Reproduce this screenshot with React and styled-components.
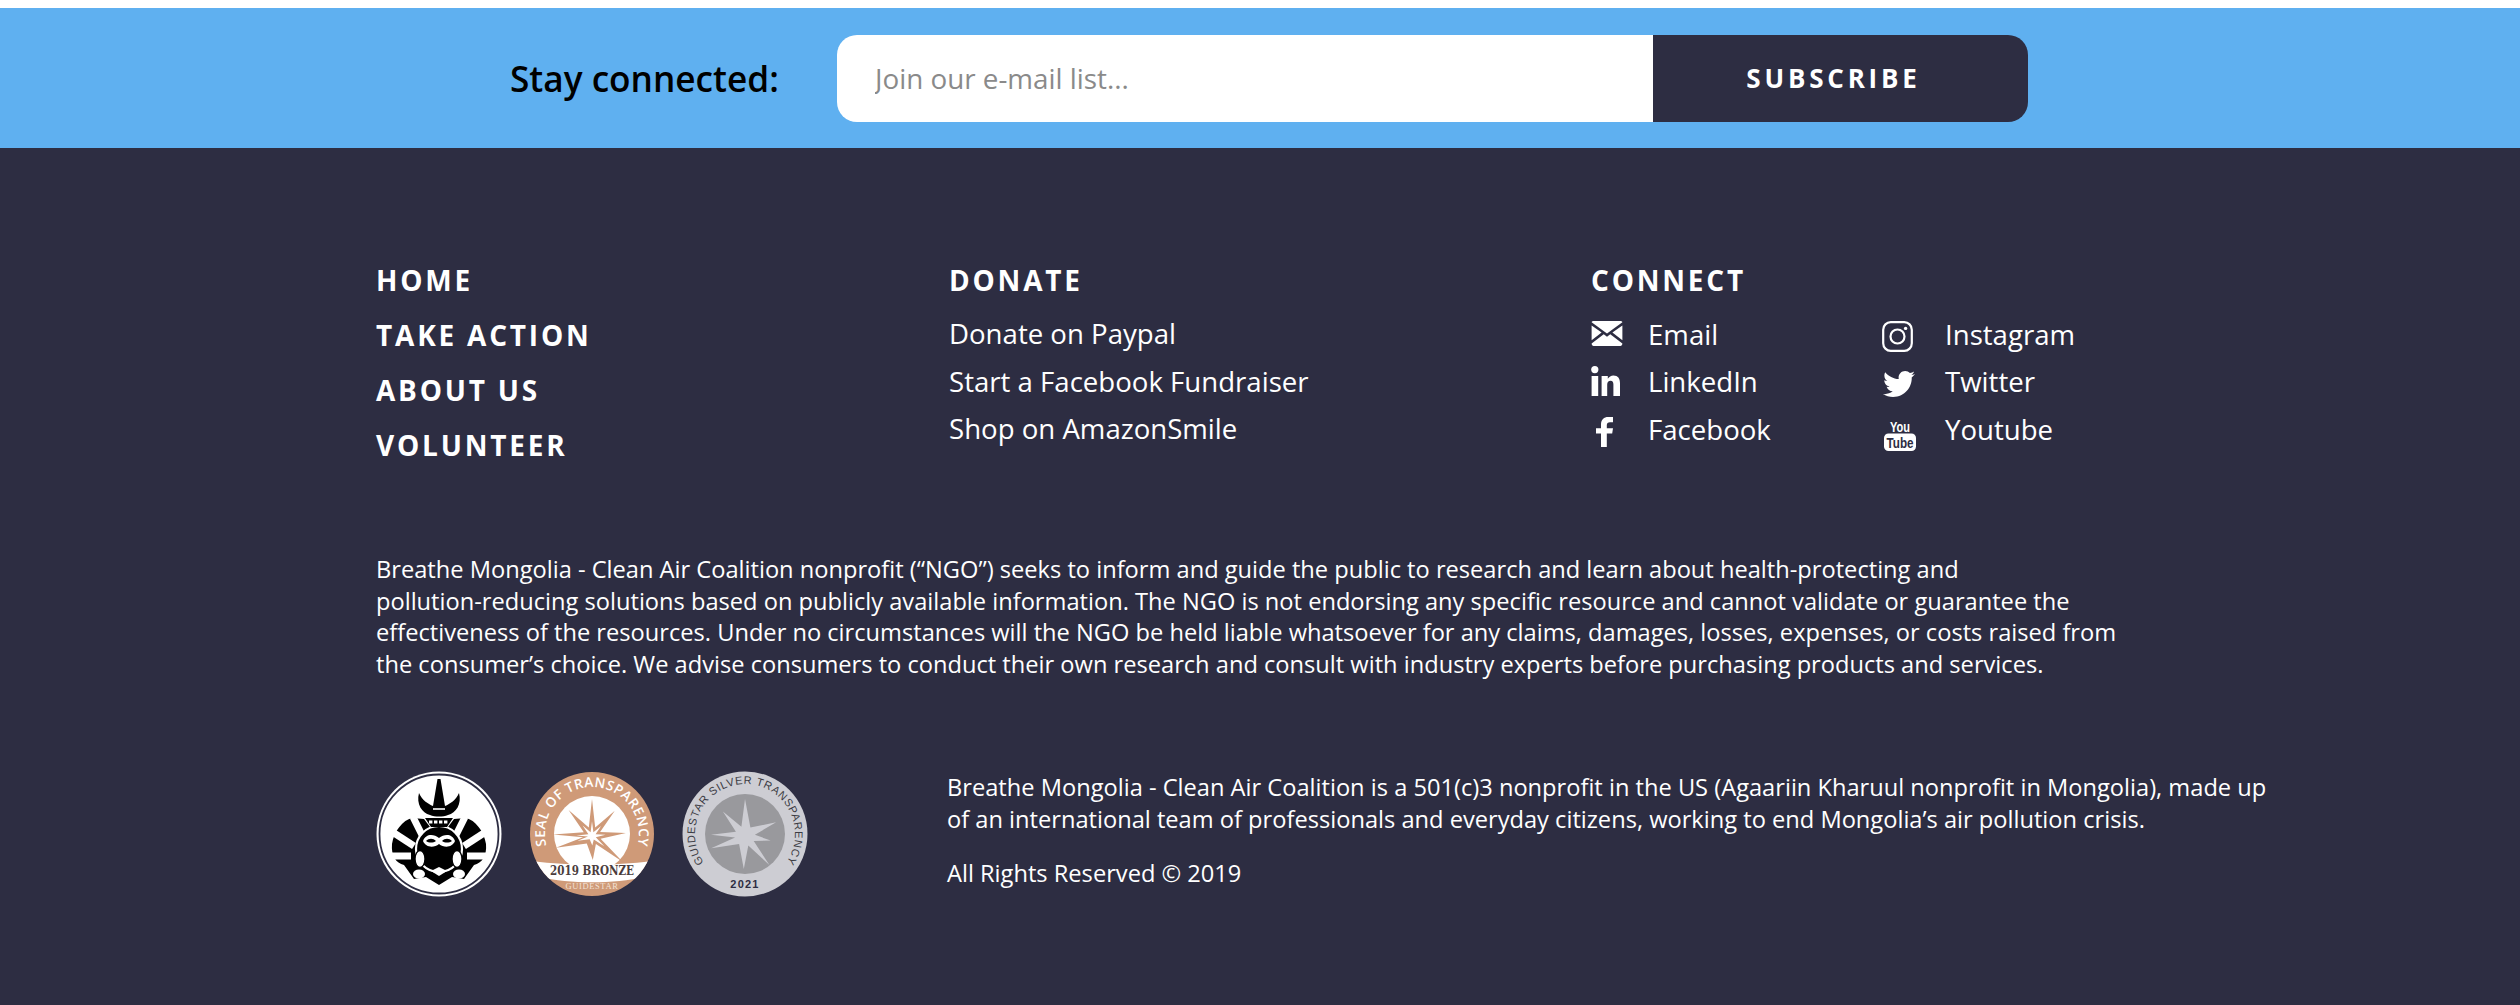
import React from 'react';
import styled, { createGlobalStyle } from 'styled-components';
import { FaTwitter } from 'react-icons/fa';

const GlobalStyle = createGlobalStyle`
  html, body {
    margin: 0;
    padding: 0;
    background: #fff;
    font-family: "Open Sans", "Liberation Sans", sans-serif;
  }
`;

const Page = styled.div`
  width: 2520px;
  height: 1005px;
  padding-top: 8px;
  box-sizing: border-box;
  display: flex;
  flex-direction: column;
  overflow: hidden;
`;

const SubscribeBar = styled.form`
  height: 140px;
  flex: none;
  background: #5fb0f0;
  display: flex;
  align-items: center;
  padding-left: 510px;
  box-sizing: border-box;
`;

const SubscribeLabel = styled.label`
  width: 327px;
  font-size: 35.2px;
  font-weight: 600;
  color: #000;
`;

const EmailInput = styled.input`
  width: 816px;
  height: 87px;
  box-sizing: border-box;
  border: none;
  outline: none;
  border-radius: 20px 0 0 20px;
  padding: 0 38px;
  font-family: inherit;
  font-size: 27.8px;
  color: #333;
  background: #fff;

  &::placeholder {
    color: #8a8a8a;
    opacity: 1;
  }
`;

const SubscribeButton = styled.button`
  width: 375px;
  height: 87px;
  padding: 0 14px 0 0;
  border: none;
  border-radius: 0 20px 20px 0;
  background: #2d2d42;
  color: #fff;
  font-family: inherit;
  font-size: 26px;
  font-weight: 700;
  letter-spacing: 3.8px;
`;

const Footer = styled.footer`
  flex: 1;
  background: #2d2d42;
  color: #fff;
  padding: 113px 0 0 376px;
  box-sizing: border-box;
`;

const Columns = styled.div`
  display: grid;
  grid-template-columns: 573px 642px 560px;
`;

const NavList = styled.div`
  display: flex;
  flex-direction: column;
  gap: 17px;
`;

const NavHeading = styled.a`
  font-size: 28px;
  line-height: 38px;
  font-weight: 700;
  letter-spacing: 2.8px;
  color: #fff;
`;

const LinkColumn = styled.div`
  display: flex;
  flex-direction: column;
`;

const ColumnLinks = styled.div`
  display: flex;
  flex-direction: column;
  margin-top: 11px;
`;

const TextLink = styled.a`
  font-size: 27.6px;
  line-height: 47.5px;
  height: 47.5px;
  color: #fff;
`;

const SocialGrid = styled.div`
  display: grid;
  grid-template-columns: 289px 1fr;
  margin-top: 11px;
`;

const SocialLink = styled.a`
  display: flex;
  align-items: center;
  height: 47.5px;
  font-size: 27.6px;
  color: #fff;
`;

const SocialIcon = styled.span`
  width: ${(p) => p.$width || 57}px;
  padding-left: ${(p) => p.$indent || 0}px;
  padding-top: ${(p) => (p.$drop || 0) * 2}px;
  box-sizing: border-box;
  flex: none;
  display: flex;
  align-items: center;
  svg {
    display: block;
    fill: #fff;
  }
`;

const LegalText = styled.p`
  width: 1750px;
  margin: 90px 0 0;
  font-size: 23.65px;
  line-height: 31.5px;
`;

const BottomRow = styled.div`
  display: flex;
  margin-top: 91px;
`;

const Badges = styled.div`
  width: 571px;
  flex: none;
  display: flex;
  gap: 27px;
`;

const BadgeSvg = styled.svg`
  width: 126px;
  height: 126px;
  display: block;
`;

const About = styled.div`
  width: 1335px;
  padding-top: 1px;
  font-size: 23.65px;
  line-height: 31.5px;
`;

const AboutText = styled.p`
  margin: 0 0 23px;
`;

const EnvelopeIcon = () => (
  <svg width="32" height="25" viewBox="0 0 32 26">
    <path d="M2 0h28c1 0 2 .6 2 1.4L16 13 0 1.4C0 .6 1 0 2 0z" />
    <path d="M0 4.6V20l10.4-8zM32 4.6V20l-10.4-8z" />
    <path d="M0 23.4C0 25 1 26 2 26h28c1 0 2-1 2-2.6l-12.6-9.6L16 16.4l-3.4-2.6z" />
  </svg>
);

const LinkedinIcon = () => (
  <svg width="29" height="30" viewBox="0 0 29 30">
    <circle cx="3.8" cy="3.6" r="3.6" />
    <rect x="0.6" y="10" width="6.6" height="20" />
    <path d="M10.6 10h6.2v2.8c1.2-2 3.2-3.3 5.6-3.3 4.6 0 6.6 3 6.6 7.8V30h-6.6V18.6c0-2.4-.8-3.8-2.8-3.8-2.2 0-3.4 1.6-3.4 4V30h-5.6z" />
  </svg>
);

const FacebookIcon = () => (
  <svg width="17" height="30" viewBox="0 0 17 30">
    <path d="M5 30V16.6H0v-5.4h5V7.4C5 2.6 8 0 12.2 0H17v5.2h-3c-2.2 0-3.2 1-3.2 3v3H17l-.8 5.4h-5.4V30z" />
  </svg>
);

const InstagramIcon = () => (
  <svg width="31" height="31" viewBox="0 0 31 31">
    <rect x="1.2" y="1.2" width="28.6" height="28.6" rx="7.5" fill="none" stroke="#fff" strokeWidth="2.2" />
    <circle cx="15.5" cy="15.5" r="7" fill="none" stroke="#fff" strokeWidth="2.2" />
    <circle cx="23.6" cy="7.4" r="1.7" />
  </svg>
);

const YoutubeIcon = () => (
  <svg width="32" height="39" viewBox="0 -4 32 39">
    <text x="16" y="12" textAnchor="middle" fontFamily="Liberation Sans" fontWeight="700" fontSize="14" textLength="20" lengthAdjust="spacingAndGlyphs" fill="#fff">You</text>
    <rect x="0" y="13.5" width="32" height="17.5" rx="4.5" fill="#fff" />
    <text x="16" y="27.5" textAnchor="middle" fontFamily="Liberation Sans" fontWeight="700" fontSize="14" textLength="27" lengthAdjust="spacingAndGlyphs" fill="#2d2d42">Tube</text>
  </svg>
);

// spiky compass star used on both GuideStar seals, rays are [angle, length]
const starPoints = (cx, cy, rays, inner) => rays.flatMap(([deg, len], i) => {
  const next = rays[(i + 1) % rays.length][0];
  const mid = deg + (((next - deg + 360) % 360) / 2);
  const a = ((deg - 90) * Math.PI) / 180;
  const b = ((mid - 90) * Math.PI) / 180;
  return [
    `${(cx + len * Math.cos(a)).toFixed(1)},${(cy + len * Math.sin(a)).toFixed(1)}`,
    `${(cx + inner * Math.cos(b)).toFixed(1)},${(cy + inner * Math.sin(b)).toFixed(1)}`,
  ];
}).join(' ');

const BRONZE_RAYS = [[0, 37], [42, 34], [85, 34], [130, 40], [178, 24], [252, 38], [272, 39], [318, 35]];
const SILVER_RAYS = [[0, 37], [66, 34], [100, 26], [140, 38], [182, 33], [250, 36], [272, 34], [318, 33]];

const MaskBadge = () => (
  <BadgeSvg viewBox="0 0 126 126">
    <circle cx="63" cy="63" r="62.5" fill="#fff" />
    <circle cx="63" cy="63" r="59.5" fill="none" stroke="#2d2d42" strokeWidth="1.8" />
    <path d="M61.5 8 L64.5 8 L69 35 C74 33 80 29 83 22 C86 33 80 42 72 44 C67 46 59 46 54 44 C46 42 40 33 43 22 C46 29 52 33 57 35 Z" fill="#000" />
    <path d="M57 38h12" stroke="#fff" strokeWidth="1.6" />
    <path d="M36 47 C27 49 18 60 16 73 C15 85 20 92 28 94 L38 108 L50 106 L63 114 L76 106 L88 108 L98 94 C106 92 111 85 110 73 C108 60 99 49 90 47 L78 48 L72 56 L54 56 L48 48 Z" fill="#000" />
    <g stroke="#fff" strokeWidth="7" fill="none">
      <path d="M37 46 L46 64" />
      <path d="M89 46 L80 64" />
      <path d="M18 62 L38 75" />
      <path d="M108 62 L88 75" />
      <path d="M14 85 L35 85" />
      <path d="M112 85 L91 85" />
    </g>
    <circle cx="63" cy="78" r="23" fill="#000" stroke="#fff" strokeWidth="2.2" />
    <ellipse cx="44" cy="88" rx="5" ry="8.5" fill="#fff" stroke="#000" strokeWidth="1.4" />
    <ellipse cx="81" cy="88" rx="5" ry="8.5" fill="#fff" stroke="#000" strokeWidth="1.4" />
    <ellipse cx="43" cy="103" rx="6" ry="4.5" fill="#fff" />
    <ellipse cx="83" cy="103" rx="6" ry="4.5" fill="#fff" />
    <path d="M47 70 C50 62 58 63 63 67 C68 63 76 62 79 70 C76 77 68 77 63 73 C58 77 50 77 47 70 Z" fill="#fff" />
    <path d="M50 70 C53 67 57 67 60 70 C57 72 53 72 50 70 Z M66 70 C69 67 73 67 76 70 C73 72 69 72 66 70 Z" fill="#000" />
    <path d="M55 100 L63 96 L71 100 L63 105 Z" fill="#fff" />
    <path d="M49 47 L77 47 L71 56 L55 56 Z" fill="#000" />
    <path d="M53 51h20" stroke="#fff" strokeWidth="3" strokeDasharray="3.4 1.6" />
  </BadgeSvg>
);

const BronzeBadge = () => (
  <BadgeSvg viewBox="0 0 126 126">
    <defs>
      <path id="bronzeArc" d="M63 110 A 47 47 0 0 1 63 16 A 47 47 0 0 1 63 110" />
      <clipPath id="bronzeClip"><circle cx="63" cy="63" r="62" /></clipPath>
    </defs>
    <circle cx="63" cy="63" r="62" fill="#cf9a78" />
    <circle cx="63" cy="63" r="38" fill="#fff" />
    <polygon points={starPoints(63, 65, BRONZE_RAYS, 9)} fill="#cf9a78" />
    <polygon points={starPoints(63, 65, BRONZE_RAYS.map(([a, r]) => [a, r * 0.4]), 4)} fill="#fff" />
    <text fontFamily="Open Sans" fontWeight="600" fontSize="13.6" letterSpacing="0.5" fill="#fff">
      <textPath href="#bronzeArc" startOffset="50%" textAnchor="middle">SEAL OF TRANSPARENCY</textPath>
    </text>
    <g clipPath="url(#bronzeClip)">
      <path d="M4 90 C40 95 86 95 122 90 L116 106 C84 113 42 113 10 106 Z" fill="#fff" />
    </g>
    <text x="63" y="104" textAnchor="middle" fontFamily="DejaVu Serif" fontWeight="700" fontSize="12" fill="#4a3c3c" textLength="84" lengthAdjust="spacingAndGlyphs">2019 BRONZE</text>
    <text x="63" y="118" textAnchor="middle" fontFamily="Liberation Serif" fontSize="8.5" letterSpacing="0.6" fill="#f3e2d5">GUIDESTAR</text>
  </BadgeSvg>
);

const SilverBadge = () => (
  <BadgeSvg viewBox="0 0 126 126">
    <defs>
      <path id="silverArc" d="M63 113 A 50 50 0 0 1 63 13 A 50 50 0 0 1 63 113" />
    </defs>
    <circle cx="63" cy="63" r="62.5" fill="#cdcdd3" />
    <circle cx="63" cy="63" r="40" fill="#99999d" />
    <polygon points={starPoints(63, 65, SILVER_RAYS, 10)} fill="#cdcdd3" />
    <text fontFamily="Liberation Sans" fontSize="11" letterSpacing="0.7" fill="#3c3c44">
      <textPath href="#silverArc" startOffset="50%" textAnchor="middle">GUIDESTAR SILVER TRANSPARENCY</textPath>
    </text>
    <text x="63" y="117" textAnchor="middle" fontFamily="Liberation Sans" fontWeight="700" fontSize="11" letterSpacing="1.2" fill="#2d2d42">2021</text>
  </BadgeSvg>
);

export default function App() {
  return (
    <Page>
      <GlobalStyle />
      <SubscribeBar>
        <SubscribeLabel htmlFor="email">Stay connected:</SubscribeLabel>
        <EmailInput id="email" placeholder="Join our e-mail list..." />
        <SubscribeButton type="button">SUBSCRIBE</SubscribeButton>
      </SubscribeBar>

      <Footer>
        <Columns>
          <NavList>
            <NavHeading>HOME</NavHeading>
            <NavHeading>TAKE ACTION</NavHeading>
            <NavHeading>ABOUT US</NavHeading>
            <NavHeading>VOLUNTEER</NavHeading>
          </NavList>

          <LinkColumn>
            <NavHeading>DONATE</NavHeading>
            <ColumnLinks>
              <TextLink>Donate on Paypal</TextLink>
              <TextLink>Start a Facebook Fundraiser</TextLink>
              <TextLink>Shop on AmazonSmile</TextLink>
            </ColumnLinks>
          </LinkColumn>

          <LinkColumn>
            <NavHeading>CONNECT</NavHeading>
            <SocialGrid>
              <SocialLink>
                <SocialIcon><EnvelopeIcon /></SocialIcon>
                Email
              </SocialLink>
              <SocialLink>
                <SocialIcon $width={65} $indent={2} $drop={3}><InstagramIcon /></SocialIcon>
                Instagram
              </SocialLink>
              <SocialLink>
                <SocialIcon><LinkedinIcon /></SocialIcon>
                LinkedIn
              </SocialLink>
              <SocialLink>
                <SocialIcon $width={65} $indent={3} $drop={3}><FaTwitter size={32} /></SocialIcon>
                Twitter
              </SocialLink>
              <SocialLink>
                <SocialIcon $indent={5} $drop={3}><FacebookIcon /></SocialIcon>
                Facebook
              </SocialLink>
              <SocialLink>
                <SocialIcon $width={65} $indent={4} $drop={7}><YoutubeIcon /></SocialIcon>
                Youtube
              </SocialLink>
            </SocialGrid>
          </LinkColumn>
        </Columns>

        <LegalText>
          Breathe Mongolia - Clean Air Coalition nonprofit (“NGO”) seeks to inform and guide the public to research and learn about health-protecting and
          <br />
          pollution-reducing solutions based on publicly available information. The NGO is not endorsing any specific resource and cannot validate or guarantee the effectiveness of the resources. Under no circumstances will the NGO be held liable whatsoever for any claims, damages, losses, expenses, or costs raised from the consumer’s choice. We advise consumers to conduct their own research and consult with industry experts before purchasing products and services.
        </LegalText>

        <BottomRow>
          <Badges>
            <MaskBadge />
            <BronzeBadge />
            <SilverBadge />
          </Badges>
          <About>
            <AboutText>
              Breathe Mongolia - Clean Air Coalition is a 501(c)3 nonprofit in the US (Agaariin Kharuul nonprofit in Mongolia), made up of an international team of professionals and everyday citizens, working to end Mongolia’s air pollution crisis.
            </AboutText>
            <AboutText>All Rights Reserved © 2019</AboutText>
          </About>
        </BottomRow>
      </Footer>
    </Page>
  );
}
